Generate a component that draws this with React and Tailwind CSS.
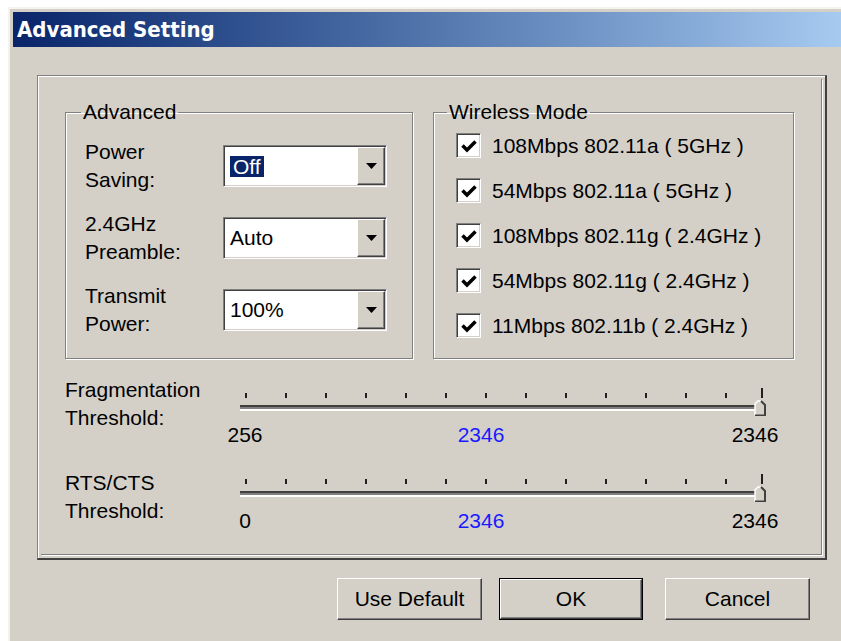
import React from "react";

const font = { fontFamily: '"Liberation Sans", Arial, sans-serif' };

// sunken edge used by combo boxes and check boxes
const sunken =
  "border border-t-[#808080] border-l-[#808080] border-r-white border-b-white shadow-[inset_1px_1px_0_#404040,inset_-1px_-1px_0_#d4d0c8]";
// raised edge used by buttons
const raised =
  "border border-t-white border-l-white border-r-[#404040] border-b-[#404040] shadow-[inset_-1px_-1px_0_#808080]";

function Combo({ value, selected }) {
  return (
    <div className={`flex h-[42px] w-[164px] bg-white p-[1px] ${sunken}`}>
      <div className="flex flex-1 items-center pl-[2px]">
        {selected ? (
          <span className="ml-[3px] bg-[#0a246a] px-[3px] leading-[21px] text-white">{value}</span>
        ) : (
          <span className="pl-[3px]">{value}</span>
        )}
      </div>
      <div className={`flex w-[28px] items-center justify-center bg-[#d4d0c8] ${raised}`}>
        <svg width="11" height="6" viewBox="0 0 11 6">
          <path d="M0 0H11L5.5 6Z" fill="#000" />
        </svg>
      </div>
    </div>
  );
}

function Check({ label }) {
  return (
    <div className="flex h-[45px] items-center pl-[22px]">
      <div className={`flex h-[25px] w-[25px] items-center justify-center bg-white ${sunken}`}>
        <svg width="16" height="14" viewBox="0 0 16 14">
          <path d="M1.5 6.5L6 11L14.5 2.5" fill="none" stroke="#000" strokeWidth="3.5" />
        </svg>
      </div>
      <span className="ml-[11px] whitespace-pre">{label}</span>
    </div>
  );
}

function Slider({ min, className }) {
  const ticks = Array.from({ length: 13 }, (_, i) => i);
  return (
    <div className={className}>
      <div className="flex h-[10px] items-end pl-[5px]">
        {ticks.map((i) => (
          <span key={i} className="mr-[38px] h-[5px] w-[2px] bg-[#202020]" />
        ))}
        <span className="-ml-[4px] h-[10px] w-[2px] bg-[#202020]" />
      </div>
      <div className="relative mt-[2px] flex h-[16px] items-center">
        <div className="h-[6px] w-[525px] border-t-[2px] border-b-[2px] border-t-[#404040] border-b-white bg-[#808080]" />
        {/* thumb sitting at the right end of the track */}
        <svg className="absolute left-[514px] top-0" width="12" height="16" viewBox="0 0 12 16">
          <path d="M1 15.5V4L4 1H7L11 5V15.5Z" fill="#d4d0c8" />
          <path d="M1 15.5V4L4 1H7" fill="none" stroke="#fff" strokeWidth="1.5" />
          <path d="M7 1L11 5V15.5H1" fill="none" stroke="#404040" strokeWidth="2" />
        </svg>
      </div>
      <div className="-ml-[25px] mt-[7px] flex leading-[24px]">
        <span className="w-[60px] text-center">{min}</span>
        <span className="ml-[176px] w-[60px] text-center text-[#1a1aff]">2346</span>
        <span className="ml-[214px] w-[60px] text-center">2346</span>
      </div>
    </div>
  );
}

function SliderRow({ title, min, className, sliderClass }) {
  return (
    <div className={`ml-[24px] flex ${className}`}>
      <div className="w-[175px] leading-[28px]">
        <div>{title}</div>
        <div>Threshold:</div>
      </div>
      <Slider min={min} className={sliderClass} />
    </div>
  );
}

export default function App() {
  const advanced = [
    { top: "Power", bottom: "Saving:", value: "Off", selected: true },
    { top: "2.4GHz", bottom: "Preamble:", value: "Auto" },
    { top: "Transmit", bottom: "Power:", value: "100%" },
  ];
  const modes = [
    "108Mbps 802.11a ( 5GHz )",
    "54Mbps 802.11a ( 5GHz )",
    "108Mbps 802.11g ( 2.4GHz )",
    "54Mbps 802.11g ( 2.4GHz )",
    "11Mbps 802.11b ( 2.4GHz )",
  ];

  return (
    <div className="h-[641px] w-[841px] overflow-hidden bg-white pl-[8px] pt-[7px] text-[21px] text-black" style={font}>
      <div className="h-[700px] border-l-2 border-t-2 border-[#f4f3ee] bg-[#d4d0c8] pl-[3px] pt-[3px]">
        {/* title bar */}
        <div className="flex h-[35px] items-center bg-gradient-to-r from-[#0a246a] to-[#a6caf0] pl-[4px]">
          <span
            className="text-[22px] font-bold text-white"
            style={{ fontFamily: '"DejaVu Sans Condensed", "DejaVu Sans", sans-serif' }}
          >
            Advanced Setting
          </span>
        </div>

        {/* main frame */}
        <div className="ml-[24px] mt-[28px] h-[485px] w-[790px] border-b-2 border-l border-r-2 border-t border-b-[#404040] border-l-[#808080] border-r-[#404040] border-t-[#808080] p-[3px] shadow-[inset_1px_1px_0_#fff]">
          <div className="h-full border-b border-r border-[#808080] shadow-[1px_1px_0_#fff]">
            <div className="ml-[24px] flex pt-[22px]">
              <fieldset className="h-[258px] w-[348px] border border-[#808080] shadow-[inset_1px_1px_0_#fff,1px_1px_0_#fff]">
                <legend className="ml-[15px] px-[2px] leading-[22px]">Advanced</legend>
                <div className="flex flex-col gap-[16px] pl-[19px] pt-[15px]">
                  {advanced.map((row) => (
                    <div key={row.top} className="flex items-center">
                      <div className="w-[138px] leading-[28px]">
                        <div>{row.top}</div>
                        <div>{row.bottom}</div>
                      </div>
                      <Combo value={row.value} selected={row.selected} />
                    </div>
                  ))}
                </div>
              </fieldset>

              <fieldset className="ml-[20px] h-[258px] w-[361px] border border-[#808080] shadow-[inset_1px_1px_0_#fff,1px_1px_0_#fff]">
                <legend className="ml-[13px] px-[2px] leading-[22px]">Wireless Mode</legend>
                <div className="flex flex-col">
                  {modes.map((m) => (
                    <Check key={m} label={m} />
                  ))}
                </div>
              </fieldset>
            </div>

            <SliderRow title="Fragmentation" min="256" className="mt-[17px]" sliderClass="pt-[12px]" />
            <SliderRow title="RTS/CTS" min="0" className="mt-[22px]" sliderClass="pt-[5px]" />
          </div>
        </div>

        {/* dialog buttons */}
        <div className="ml-[324px] mt-[18px] flex">
          <button className={`h-[42px] w-[145px] bg-[#d4d0c8] ${raised}`}>Use Default</button>
          <div className="ml-[17px] border border-black">
            <button className={`block h-[40px] w-[142px] bg-[#d4d0c8] ${raised}`}>OK</button>
          </div>
          <button className={`ml-[22px] h-[42px] w-[145px] bg-[#d4d0c8] ${raised}`}>Cancel</button>
        </div>
      </div>
    </div>
  );
}
